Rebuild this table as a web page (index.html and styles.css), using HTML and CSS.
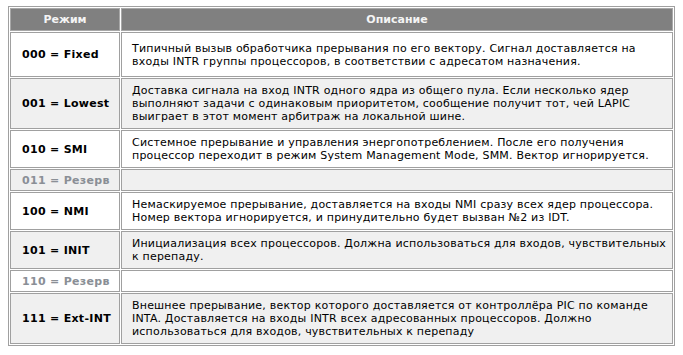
FILE: index.html
```html
<!DOCTYPE html>
<html lang="ru">
<head>
<meta charset="utf-8">
<link rel="stylesheet" href="styles.css">
</head>
<body>
<table class="modes">
  <thead>
    <tr><th class="col-mode">Режим</th><th>Описание</th></tr>
  </thead>
  <tbody>
    <tr class="odd tall">
      <td class="mode">000 = Fixed</td>
      <td class="desc">Типичный вызыв обработчика прерывания по его вектору. Сигнал доставляется на<br>входы INTR группы процессоров, в соответствии с адресатом назначения.</td>
    </tr>
    <tr class="even">
      <td class="mode">001 = Lowest</td>
      <td class="desc">Доставка сигнала на вход INTR одного ядра из общего пула. Если несколько ядер выполняют задачи с одинаковым приоритетом, сообщение получит тот, чей LAPIC выиграет в этот момент арбитраж на локальной шине.</td>
    </tr>
    <tr class="odd">
      <td class="mode">010 = SMI</td>
      <td class="desc">Системное прерывание и управления энергопотреблением. После его получения процессор переходит в режим System Management Mode, SMM. Вектор игнорируется.</td>
    </tr>
    <tr class="even reserved">
      <td class="mode">011 = Резерв</td>
      <td class="desc"></td>
    </tr>
    <tr class="odd">
      <td class="mode">100 = NMI</td>
      <td class="desc">Немаскируемое прерывание, доставляется на входы NMI сразу всех ядер процессора. Номер вектора игнорируется, и принудительно будет вызван №2 из IDT.</td>
    </tr>
    <tr class="even">
      <td class="mode">101 = INIT</td>
      <td class="desc">Инициализация всех процессоров. Должна использоваться для входов, чувствительных к перепаду.</td>
    </tr>
    <tr class="odd reserved">
      <td class="mode">110 = Резерв</td>
      <td class="desc"></td>
    </tr>
    <tr class="even">
      <td class="mode">111 = Ext-INT</td>
      <td class="desc">Внешнее прерывание, вектор которого доставляется от контроллёра PIC по команде INTA. Доставляется на входы INTR всех адресованных процессоров. Должно использоваться для входов, чувствительных к перепаду</td>
    </tr>
  </tbody>
</table>
</body>
</html>
```

FILE: styles.css
```css
html, body {
  margin: 0;
  padding: 0;
  background: #ffffff;
}
body {
  padding: 6px 8px 0 8px;
  font-family: "DejaVu Sans", Verdana, sans-serif;
  font-size: 11px;
  line-height: 13px;
  color: #000000;
}
.modes {
  width: 667px;
  border: 1px solid #a0a0a0;
  border-collapse: separate;
  border-spacing: 1px;
}
.modes th {
  background: #808080;
  color: #f4f4f4;
  font-weight: bold;
  font-size: 11px;
  text-align: center;
  height: 21px;
  padding: 0;
  border: 1px solid #a8a8a8;
}
.col-mode {
  width: 108px;
}
.modes td {
  border: 1px solid #a0a0a0;
  vertical-align: middle;
}
.mode {
  font-weight: bold;
  letter-spacing: 0.3px;
  padding: 0 2px 0 11px;
  white-space: nowrap;
}
.desc {
  letter-spacing: 0.2px;
  padding: 5px 2px 5px 10px;
}
.odd td { background: #ffffff; }
.even td { background: #f0f0f0; }
.tall td { height: 35px; }
.tall .desc { padding-top: 4px; padding-bottom: 4px; }
.reserved td { height: 20px; padding-top: 0; padding-bottom: 0; }
.reserved .mode { color: #8a8f96; }
```
